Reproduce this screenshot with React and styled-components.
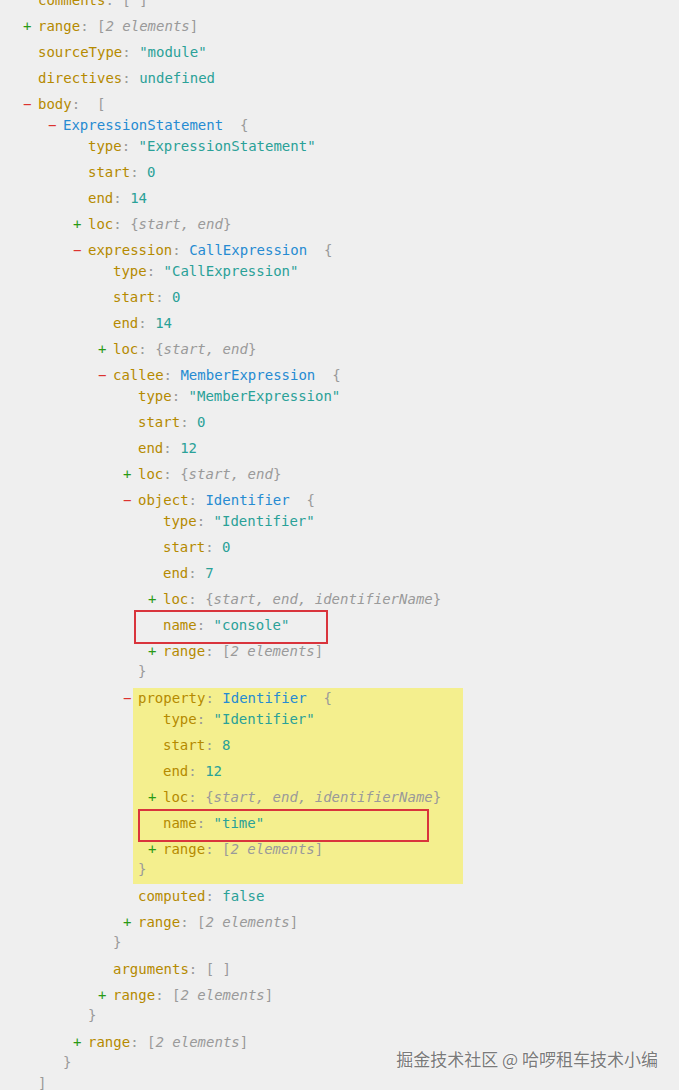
import React from 'react';
import styled, { createGlobalStyle, css } from 'styled-components';

const GlobalStyle = createGlobalStyle`
  * { box-sizing: border-box; }
  body {
    margin: 0;
    background: #efefef;
    font-family: "DejaVu Sans Mono", "Liberation Mono", monospace;
    font-size: 14px;
  }
`;

const c = {
  key: '#b58a00',
  str: '#2aa198',
  type: '#268bd2',
  punct: '#9a9a9a',
  minus: '#dc322f',
  plus: '#2a9a14',
};

const Page = styled.div`
  position: relative;
  height: 1090px;
  overflow: hidden;
`;

const List = styled.ul`
  list-style: none;
  margin: ${p => (p.$root ? '-10px 0 0' : '0')};
  padding: 0 0 0 ${p => (p.$root ? 33 : 20)}px;
  display: flex;
  flex-direction: column;
  gap: 5px;
`;

const Entry = styled.li`
  display: flex;
  flex-direction: column;
  padding-left: 5px;
  ${p =>
    p.$highlight &&
    css`
      background: #f4ef8e;
      width: 330px;
      align-self: flex-start;
      padding-bottom: 3px;
      margin-bottom: -3px;
    `}
`;

const Line = styled.div`
  position: relative;
  height: 21px;
  line-height: 21px;
  white-space: pre;
  ${p =>
    p.$box &&
    css`
      &::after {
        content: '';
        position: absolute;
        left: ${p.$box.left}px;
        top: ${p.$box.top}px;
        width: ${p.$box.width}px;
        height: ${p.$box.height}px;
        border: 2px solid #d9343c;
      }
    `}
`;

const Toggle = styled.span`
  display: inline-block;
  width: 15px;
  margin-left: -15px;
  color: ${p => (p.$open ? c.minus : c.plus)};
`;

const Key = styled.span`
  color: ${c.key};
`;

const Punct = styled.span`
  color: ${c.punct};
`;

const Value = styled.span`
  color: ${c.str};
`;

const TypeName = styled.span`
  color: ${c.type};
`;

const Summary = styled.span`
  color: ${c.punct};
  font-style: italic;
`;

const Closing = styled.div`
  height: 21px;
  line-height: 21px;
  margin: -1px 0 1px;
  color: ${c.punct};
`;

const Watermark = styled.div`
  position: absolute;
  right: 21px;
  bottom: 20px;
  font-family: "Noto Sans CJK SC", sans-serif;
  font-size: 17px;
  line-height: 22px;
  color: #7a7a7a;
  text-shadow: 0 0 2px #fff, 0 0 1px #fff;
`;

const loc = '{start, end}';
const locId = '{start, end, identifierName}';
const range = { k: 'range', summary: ['[', '2 elements', ']'] };
const locOf = s => ({ k: 'loc', summary: ['{', s.slice(1, -1), '}'] });

const tree = [
  { k: 'comments', empty: '[ ]' },
  range,
  { k: 'sourceType', v: '"module"' },
  { k: 'directives', v: 'undefined' },
  {
    k: 'body',
    open: ' [',
    close: ']',
    children: [
      {
        type: 'ExpressionStatement',
        children: [
          { k: 'type', v: '"ExpressionStatement"' },
          { k: 'start', v: '0' },
          { k: 'end', v: '14' },
          locOf(loc),
          {
            k: 'expression',
            type: 'CallExpression',
            children: [
              { k: 'type', v: '"CallExpression"' },
              { k: 'start', v: '0' },
              { k: 'end', v: '14' },
              locOf(loc),
              {
                k: 'callee',
                type: 'MemberExpression',
                children: [
                  { k: 'type', v: '"MemberExpression"' },
                  { k: 'start', v: '0' },
                  { k: 'end', v: '12' },
                  locOf(loc),
                  {
                    k: 'object',
                    type: 'Identifier',
                    children: [
                      { k: 'type', v: '"Identifier"' },
                      { k: 'start', v: '0' },
                      { k: 'end', v: '7' },
                      locOf(locId),
                      { k: 'name', v: '"console"', box: { left: -29, top: -5, width: 190, height: 30 } },
                      range,
                    ],
                  },
                  {
                    k: 'property',
                    type: 'Identifier',
                    highlight: true,
                    children: [
                      { k: 'type', v: '"Identifier"' },
                      { k: 'start', v: '8' },
                      { k: 'end', v: '12' },
                      locOf(locId),
                      { k: 'name', v: '"time"', box: { left: -25, top: -4, width: 287, height: 29 } },
                      range,
                    ],
                  },
                  { k: 'computed', v: 'false' },
                  range,
                ],
              },
              { k: 'arguments', empty: '[ ]' },
              range,
            ],
          },
          range,
        ],
      },
    ],
  },
];

const Node = ({ node }) => {
  const expanded = !!node.children;
  const collapsed = !!node.summary;
  const open = node.open || '  {';
  return (
    <Entry $highlight={node.highlight}>
      <Line $box={node.box}>
        {(expanded || collapsed) && <Toggle $open={expanded}>{expanded ? '−' : '+'}</Toggle>}
        {node.k && <Key>{node.k}</Key>}
        {node.k && <Punct>: </Punct>}
        {node.v && <Value>{node.v}</Value>}
        {node.empty && <Punct>{node.empty}</Punct>}
        {collapsed && (
          <>
            <Punct>{node.summary[0]}</Punct>
            <Summary>{node.summary[1]}</Summary>
            <Punct>{node.summary[2]}</Punct>
          </>
        )}
        {node.type && <TypeName>{node.type}</TypeName>}
        {expanded && <Punct>{open}</Punct>}
      </Line>
      {expanded && (
        <>
          <List>
            {node.children.map((child, i) => (
              <Node key={i} node={child} />
            ))}
          </List>
          <Closing>{node.close || '}'}</Closing>
        </>
      )}
    </Entry>
  );
};

export default function App() {
  return (
    <Page>
      <GlobalStyle />
      <List $root>
        {tree.map((n, i) => (
          <Node key={i} node={n} />
        ))}
      </List>
      <Watermark>掘金技术社区 @ 哈啰租车技术小编</Watermark>
    </Page>
  );
}
